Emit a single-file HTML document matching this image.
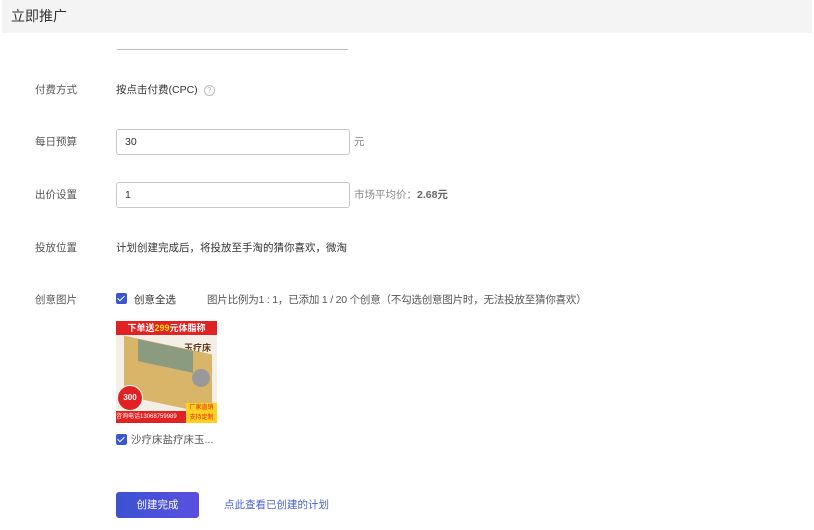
<!DOCTYPE html>
<html><head><meta charset="utf-8"><style>
body{margin:0;width:814px;height:530px;background:#fff;font-family:"Liberation Sans","Noto Sans CJK SC",sans-serif;color:#333;position:relative;overflow:hidden}
.a{position:absolute;font-size:10.5px;white-space:nowrap}
.hd{position:absolute;left:2px;top:0;width:810px;height:33px;background:#f4f4f4}
.hd span{position:absolute;left:9px;top:6px;font-size:14px;color:#333}
.lbl{color:#555}
.inp{position:absolute;left:116px;width:234px;height:26px;border:1px solid #c8c8cc;border-radius:3px;box-sizing:border-box;font-size:10.5px;padding:6px 0 0 8px;color:#333}
.cb{position:absolute;width:11px;height:11px;background:#3a56d4;border-radius:2px}
.cb:after{content:"";position:absolute;left:3px;top:1px;width:3px;height:6px;border:solid #fff;border-width:0 1.5px 1.5px 0;transform:rotate(45deg)}
</style></head><body>
<div class="hd"><span>立即推广</span></div>
<div style="position:absolute;left:117px;top:49px;width:231px;height:1px;background:#bbb"></div>
<div class="a lbl" style="left:35px;top:82px">付费方式</div>
<div class="a" style="left:116px;top:82px">按点击付费(CPC) <span style="display:inline-block;width:9px;height:9px;border:1px solid #bbb;border-radius:50%;font-size:8px;line-height:9px;text-align:center;color:#bbb;margin-left:3px">?</span></div>
<div class="a lbl" style="left:35px;top:134px">每日预算</div>
<div class="inp" style="top:129px">30</div>
<div class="a" style="left:354px;top:134px;color:#888">元</div>
<div class="a lbl" style="left:35px;top:187px">出价设置</div>
<div class="inp" style="top:182px">1</div>
<div class="a" style="left:354px;top:187px;color:#888">市场平均价：<b style="color:#666">2.68元</b></div>
<div class="a lbl" style="left:35px;top:240px">投放位置</div>
<div class="a" style="left:116px;top:240px">计划创建完成后，将投放至手淘的猜你喜欢，微淘</div>
<div class="a lbl" style="left:35px;top:292px">创意图片</div>
<div class="cb" style="left:116px;top:293px"></div>
<div class="a" style="left:134px;top:292px">创意全选</div>
<div class="a" style="left:207px;top:292px;color:#555;letter-spacing:-0.2px">图片比例为1 : 1，已添加 1 / 20 个创意（不勾选创意图片时，无法投放至猜你喜欢）</div>
<div style="position:absolute;left:116px;top:321px;width:101px;height:102px;background:#f3efe6;overflow:hidden">
 <div style="position:absolute;left:0;top:0;width:101px;height:14px;background:#e02222;color:#fff;font-size:9px;line-height:14px;text-align:center;font-weight:bold">下单送<span style="color:#ffde00">299</span>元体脂称</div>
 <div style="position:absolute;left:68px;top:20px;font-size:9px;color:#6a3a1a;font-weight:bold">玉疗床</div>
 <div style="position:absolute;left:8px;top:24px;width:88px;height:60px;background:#d9b56a;transform:skewY(12deg)"></div>
 <div style="position:absolute;left:22px;top:24px;width:55px;height:22px;background:#8a9b80;transform:skewY(12deg)"></div>
 <div style="position:absolute;left:76px;top:48px;width:18px;height:18px;border-radius:50%;background:#999"></div>
 <div style="position:absolute;left:1px;top:64px;width:24px;height:24px;border-radius:50%;background:#e02222;border:1px solid #fff;color:#fff;font-size:8px;text-align:center;line-height:24px;font-weight:bold">300</div>
 <div style="position:absolute;left:0;top:90px;width:70px;height:12px;background:#e02222;color:#fff;font-size:6px;line-height:12px">咨询电话13068759989</div>
 <div style="position:absolute;left:70px;top:82px;width:31px;height:20px;background:#ffd21f;color:#d22;font-size:6px;line-height:10px;text-align:center">厂家直销<br>支持定制</div>
</div>
<div class="cb" style="left:116px;top:434px"></div>
<div class="a" style="left:131px;top:432px;color:#555">沙疗床盐疗床玉...</div>
<div style="position:absolute;left:116px;top:492px;width:83px;height:26px;border-radius:3px;background:linear-gradient(90deg,#3b52d0,#5b4fe0);color:#fff;font-size:10.5px;text-align:center;line-height:26px">创建完成</div>
<div class="a" style="left:224px;top:497px;color:#4a5fd8">点此查看已创建的计划</div>
</body></html>
